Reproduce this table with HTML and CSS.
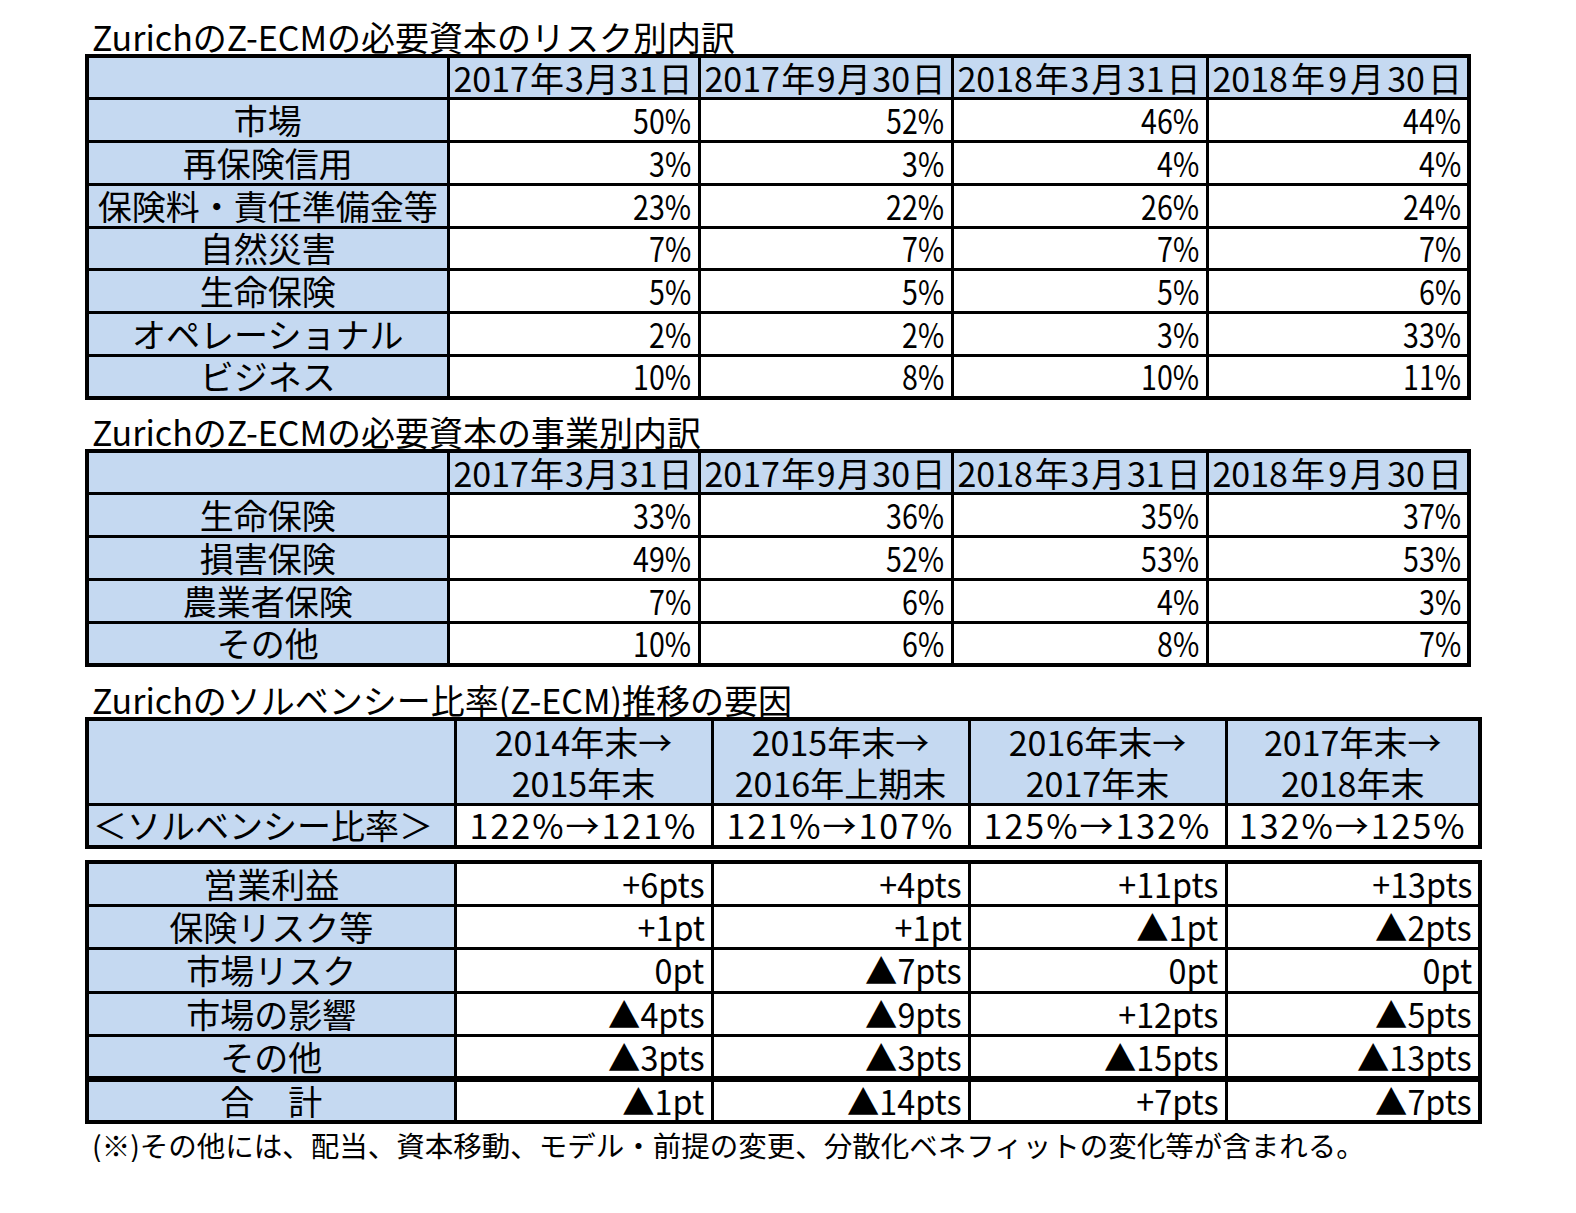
FILE: index.html
```html
<!DOCTYPE html>
<html lang="ja">
<head>
<meta charset="utf-8">
<title>Zurich Z-ECM</title>
<link rel="stylesheet" href="styles.css">
</head>
<body>
<div class="page">
  <div class="title">ZurichのZ-ECMの必要資本のリスク別内訳</div>
  <table class="t t-a">
    <colgroup><col class="c0"><col class="c1"><col class="c2"><col class="c3"><col class="c4"></colgroup>
    <tr class="head"><th class="lbl"></th><th class="date">2017年3月31日</th><th class="date">2017年9月30日</th><th class="date">2018年3月31日</th><th class="date">2018年9月30日</th></tr>
    <tr><th class="lbl">市場</th><td><span class="pc">50%</span></td><td><span class="pc">52%</span></td><td><span class="pc">46%</span></td><td><span class="pc">44%</span></td></tr>
    <tr><th class="lbl">再保険信用</th><td><span class="pc">3%</span></td><td><span class="pc">3%</span></td><td><span class="pc">4%</span></td><td><span class="pc">4%</span></td></tr>
    <tr><th class="lbl">保険料・責任準備金等</th><td><span class="pc">23%</span></td><td><span class="pc">22%</span></td><td><span class="pc">26%</span></td><td><span class="pc">24%</span></td></tr>
    <tr><th class="lbl">自然災害</th><td><span class="pc">7%</span></td><td><span class="pc">7%</span></td><td><span class="pc">7%</span></td><td><span class="pc">7%</span></td></tr>
    <tr><th class="lbl">生命保険</th><td><span class="pc">5%</span></td><td><span class="pc">5%</span></td><td><span class="pc">5%</span></td><td><span class="pc">6%</span></td></tr>
    <tr><th class="lbl">オペレーショナル</th><td><span class="pc">2%</span></td><td><span class="pc">2%</span></td><td><span class="pc">3%</span></td><td><span class="pc">33%</span></td></tr>
    <tr><th class="lbl">ビジネス</th><td><span class="pc">10%</span></td><td><span class="pc">8%</span></td><td><span class="pc">10%</span></td><td><span class="pc">11%</span></td></tr>
  </table>

  <div class="title title-2">ZurichのZ-ECMの必要資本の事業別内訳</div>
  <table class="t t-a">
    <colgroup><col class="c0"><col class="c1"><col class="c2"><col class="c3"><col class="c4"></colgroup>
    <tr class="head"><th class="lbl"></th><th class="date">2017年3月31日</th><th class="date">2017年9月30日</th><th class="date">2018年3月31日</th><th class="date">2018年9月30日</th></tr>
    <tr><th class="lbl">生命保険</th><td><span class="pc">33%</span></td><td><span class="pc">36%</span></td><td><span class="pc">35%</span></td><td><span class="pc">37%</span></td></tr>
    <tr><th class="lbl">損害保険</th><td><span class="pc">49%</span></td><td><span class="pc">52%</span></td><td><span class="pc">53%</span></td><td><span class="pc">53%</span></td></tr>
    <tr><th class="lbl">農業者保険</th><td><span class="pc">7%</span></td><td><span class="pc">6%</span></td><td><span class="pc">4%</span></td><td><span class="pc">3%</span></td></tr>
    <tr><th class="lbl">その他</th><td><span class="pc">10%</span></td><td><span class="pc">6%</span></td><td><span class="pc">8%</span></td><td><span class="pc">7%</span></td></tr>
  </table>

  <div class="title title-3">Zurichのソルベンシー比率(Z-ECM)推移の要因</div>
  <table class="t t-b">
    <colgroup><col class="d0"><col class="d1"><col class="d2"><col class="d3"><col class="d4"></colgroup>
    <tr class="head2"><th class="lbl"></th><th class="period">2014年末→<br>2015年末</th><th class="period">2015年末→<br>2016年上期末</th><th class="period">2016年末→<br>2017年末</th><th class="period">2017年末→<br>2018年末</th></tr>
    <tr><th class="lbl lbl-left">＜ソルベンシー比率＞</th><td class="ratio">122%→121%</td><td class="ratio">121%→107%</td><td class="ratio">125%→132%</td><td class="ratio">132%→125%</td></tr>
  </table>

  <table class="t t-b t-factors">
    <colgroup><col class="d0"><col class="d1"><col class="d2"><col class="d3"><col class="d4"></colgroup>
    <tr><th class="lbl">営業利益</th><td><span class="pt">+6pts</span></td><td><span class="pt">+4pts</span></td><td><span class="pt">+11pts</span></td><td><span class="pt">+13pts</span></td></tr>
    <tr><th class="lbl">保険リスク等</th><td><span class="pt">+1pt</span></td><td><span class="pt">+1pt</span></td><td><span class="pt">▲1pt</span></td><td><span class="pt">▲2pts</span></td></tr>
    <tr><th class="lbl">市場リスク</th><td><span class="pt">0pt</span></td><td><span class="pt">▲7pts</span></td><td><span class="pt">0pt</span></td><td><span class="pt">0pt</span></td></tr>
    <tr><th class="lbl">市場の影響</th><td><span class="pt">▲4pts</span></td><td><span class="pt">▲9pts</span></td><td><span class="pt">+12pts</span></td><td><span class="pt">▲5pts</span></td></tr>
    <tr><th class="lbl">その他</th><td><span class="pt">▲3pts</span></td><td><span class="pt">▲3pts</span></td><td><span class="pt">▲15pts</span></td><td><span class="pt">▲13pts</span></td></tr>
    <tr class="total"><th class="lbl">合　計</th><td><span class="pt">▲1pt</span></td><td><span class="pt">▲14pts</span></td><td><span class="pt">+7pts</span></td><td><span class="pt">▲7pts</span></td></tr>
  </table>

  <div class="note">(※)その他には、配当、資本移動、モデル・前提の変更、分散化ベネフィットの変化等が含まれる。</div>
</div>
</body>
</html>
```

FILE: styles.css
```css
html, body {
  margin: 0;
  padding: 0;
  background: #ffffff;
}

body {
  color: #000000;
  font-family: "Noto Sans CJK JP", "Noto Sans", sans-serif;
}

.page {
  padding: 20px 0 0 85px;
}

.title {
  font-size: 34px;
  line-height: 34px;
  height: 34px;
  padding-left: 7px;
  white-space: nowrap;
}

.title-2 {
  margin-top: 15px;
}

.title-3 {
  margin-top: 16px;
}

.t {
  border-collapse: collapse;
  table-layout: fixed;
  border: 4px solid #000;
}

.t-a {
  width: 1382px;
}

.t-b {
  width: 1393px;
}

.t-factors {
  margin-top: 11px;
}

.c0 { width: 361px; }
.c1 { width: 251px; }
.c2 { width: 253px; }
.c3 { width: 255px; }
.c4 { width: 262px; }

.d0 { width: 368px; }
.d1 { width: 257px; }
.d2 { width: 257px; }
.d3 { width: 257px; }
.d4 { width: 254px; }

.t tr {
  height: 42.75px;
}

.t th,
.t td {
  border: 3px solid #000;
  padding: 0 6px 0 4px;
  font-size: 34px;
  line-height: 36px;
  font-weight: normal;
  white-space: nowrap;
}

.t td {
  text-align: right;
  background: #ffffff;
}

.t th {
  background: #c5d9f1;
  text-align: center;
}

.t .lbl {
  padding: 0;
}

.t .lbl-left {
  text-align: left;
  padding-left: 4px;
}

.t .date {
  text-align: justify;
  text-align-last: justify;
  padding: 0 5px 0 4px;
}

.pc {
  display: inline-block;
  transform: scaleX(0.84);
  transform-origin: right center;
}

.pt {
  display: inline-block;
  transform: scaleX(0.95);
  transform-origin: right center;
}

.head2 {
  height: 84px;
}

.t .period {
  line-height: 41px;
  padding: 0;
}

.t .ratio {
  text-align: center;
  letter-spacing: 2px;
  padding: 0;
}

.t-factors tr {
  height: 43.4px;
}

.t .total th,
.t .total td {
  border-top-width: 6px;
}

.note {
  margin-top: 4px;
  padding-left: 7px;
  font-size: 28.5px;
  line-height: 34px;
  white-space: nowrap;
}
```
